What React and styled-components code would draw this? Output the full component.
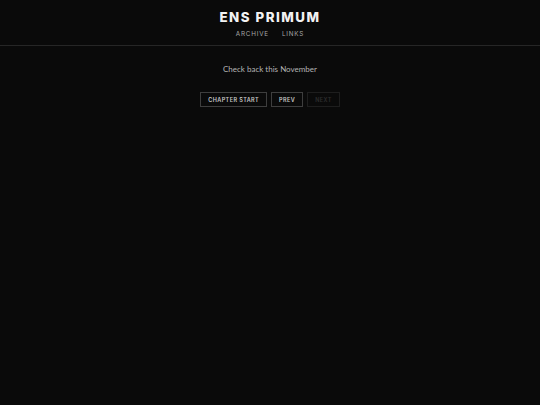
import React from "react";
import styled, { createGlobalStyle } from "styled-components";

const Global = createGlobalStyle`
  html, body {
    margin: 0;
    padding: 0;
    background: #0a0a0a;
    color: #d8d8d8;
    font-family: "Lato", "Inter", sans-serif;
  }
  body {
    min-height: 405px;
  }
`;

const Header = styled.header`
  display: flex;
  flex-direction: column;
  align-items: center;
  padding-top: 9px;
  height: 36px;
  border-bottom: 1px solid #262626;
`;

const Title = styled.h1`
  margin: 0;
  font-family: "Inter", sans-serif;
  font-size: 13.3px;
  font-weight: 800;
  letter-spacing: 1.5px;
  line-height: 16px;
  color: #f2f2f2;
`;

const Nav = styled.nav`
  display: flex;
  gap: 13px;
  margin-top: 5px;
`;

const NavLink = styled.a`
  font-family: "Inter", sans-serif;
  font-size: 6.3px;
  letter-spacing: 0.8px;
  color: #a8a8a8;
  text-decoration: none;
`;

const Main = styled.main`
  display: flex;
  flex-direction: column;
  align-items: center;
  padding-top: 17px;
`;

const Notice = styled.p`
  margin: 0;
  font-size: 8px;
  font-weight: 400;
  color: #b4b4b4;
  line-height: 12px;
`;

const Pager = styled.div`
  display: flex;
  gap: 4px;
  margin-top: 17px;
`;

const PageButton = styled.button`
  background: transparent;
  border: 1px solid ${(p) => (p.disabled ? "#1e1e1e" : "#3e3e3e")};
  color: ${(p) => (p.disabled ? "#2e2e2e" : "#c8c8c8")};
  font-family: "Inter", sans-serif;
  font-size: 5.5px;
  font-weight: 600;
  letter-spacing: 0.4px;
  height: 15px;
  padding: 0 7px;
  cursor: ${(p) => (p.disabled ? "default" : "pointer")};
`;

export default function App() {
  return (
    <>
      <Global />
      <Header>
        <Title>ENS PRIMUM</Title>
        <Nav>
          <NavLink href="#">ARCHIVE</NavLink>
          <NavLink href="#">LINKS</NavLink>
        </Nav>
      </Header>
      <Main>
        <Notice>Check back this November</Notice>
        <Pager>
          <PageButton>CHAPTER START</PageButton>
          <PageButton>PREV</PageButton>
          <PageButton disabled>NEXT</PageButton>
        </Pager>
      </Main>
    </>
  );
}
